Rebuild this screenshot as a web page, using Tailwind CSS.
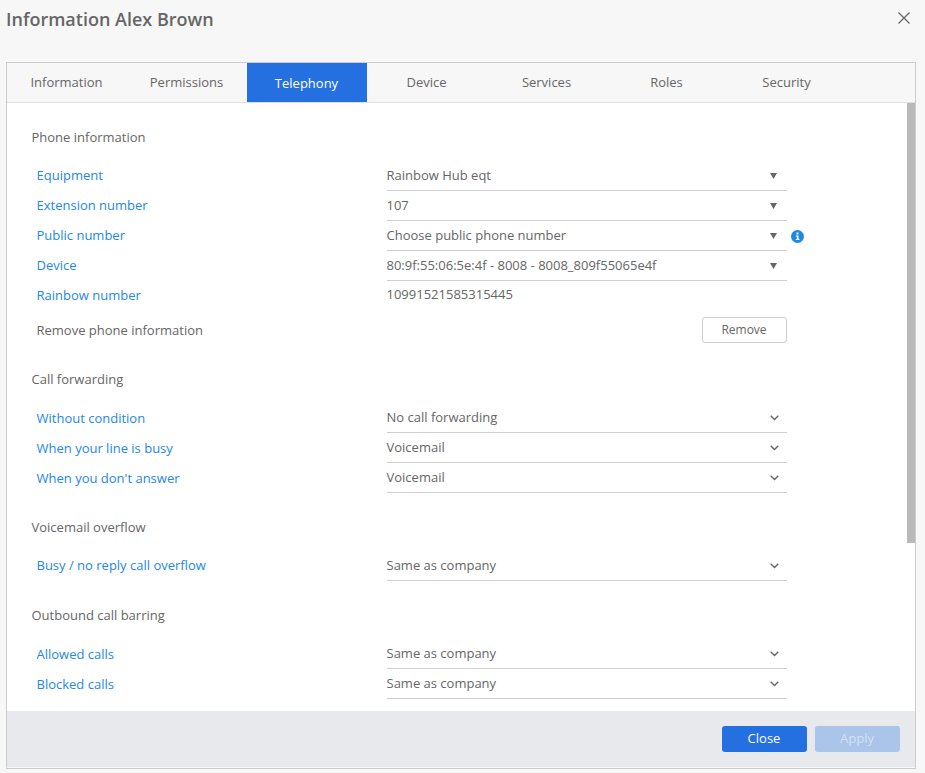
<!DOCTYPE html>
<html lang="en">
    <head>
        <meta charset="UTF-8" />
        <title>Information Alex Brown</title>
        <script src="https://cdn.jsdelivr.net/npm/@tailwindcss/browser@4"></script>
    </head>

    <body class="bg-[#f7f7f7] text-[#666] font-['Open_Sans',sans-serif] text-[13px] h-[773px] w-[925px] overflow-hidden">
        <!-- Header -->
        <div class="h-[62px] pl-[6px] pr-[14px] pt-[6px] flex justify-between items-start">
            <h1 class="text-[18px] leading-[26px] font-semibold text-[#666]">Information Alex Brown</h1>
            <svg class="w-[14px] h-[14px] mt-[5px]" viewBox="0 0 14 14" fill="none" stroke="#666" stroke-width="1.3"><path d="M1.5 1.5l11 11M12.5 1.5l-11 11" /></svg>
        </div>

        <div class="mx-[6px] w-[910px] h-[707px] border border-[#ccc] flex flex-col">
            <!-- Tabs -->
            <div class="flex h-[40px] border-b border-[#e0e0e0] shrink-0">
                <div class="w-[120px] h-[39px] pr-px flex items-center justify-center">Information</div>
                <div class="w-[120px] h-[39px] pr-px flex items-center justify-center">Permissions</div>
                <div class="w-[120px] h-[39px] pr-px flex items-center justify-center bg-[#2470e0] text-white pt-[2px]">Telephony</div>
                <div class="w-[120px] h-[39px] pr-px flex items-center justify-center">Device</div>
                <div class="w-[120px] h-[39px] pr-px flex items-center justify-center">Services</div>
                <div class="w-[120px] h-[39px] pr-px flex items-center justify-center">Roles</div>
                <div class="w-[120px] h-[39px] pr-px flex items-center justify-center">Security</div>
            </div>

            <!-- Content -->
            <div class="relative h-[608px] bg-white overflow-hidden pl-[24px] pt-[24px] shrink-0">
                <div class="absolute top-0 right-0 w-[8px] h-[440px] bg-[#b9b9b9]"></div>

                <h2 class="h-[20px] leading-[20px] mb-[14px] pl-[0.5px]">Phone information</h2>
                <div class="flex h-[30px]">
                    <div class="w-[356px] pl-[5.5px] pt-[5px] text-[#1e88e5]">Equipment</div>
                    <div class="w-[400px] flex justify-between items-center border-b border-[#d0d0d0] pt-px">
                        <span class="ml-[-0.5px]">Rainbow Hub eqt</span>
                        <svg class="w-[7px] h-[6px] mr-[10px]" viewBox="0 0 7 6" fill="#666"><path d="M0 0h7L3.5 6z" /></svg>
                    </div>
                </div>
                <div class="flex h-[30px]">
                    <div class="w-[356px] pl-[5.5px] pt-[5px] text-[#1e88e5]">Extension number</div>
                    <div class="w-[400px] flex justify-between items-center border-b border-[#d0d0d0] pt-px">
                        <span class="ml-[-0.5px]">107</span>
                        <svg class="w-[7px] h-[6px] mr-[10px]" viewBox="0 0 7 6" fill="#666"><path d="M0 0h7L3.5 6z" /></svg>
                    </div>
                </div>
                <div class="flex h-[30px]">
                    <div class="w-[356px] pl-[5.5px] pt-[5px] text-[#1e88e5]">Public number</div>
                    <div class="relative w-[400px] flex justify-between items-center border-b border-[#d0d0d0] pt-px">
                        <span class="ml-[-0.5px]">Choose public phone number</span>
                        <svg class="w-[7px] h-[6px] mr-[10px]" viewBox="0 0 7 6" fill="#666"><path d="M0 0h7L3.5 6z" /></svg>
                        <svg class="absolute left-[404px] top-[9px] w-[13px] h-[13px]" viewBox="0 0 13 13"><circle cx="6.5" cy="6.5" r="6.5" fill="#1e88e5" /><rect x="5.5" y="2.5" width="2" height="2" fill="#fff" /><path d="M4.8 5.5h2.7v3.5h1v1H4.8V9h1V6.5h-1z" fill="#fff" /></svg>
                    </div>
                </div>
                <div class="flex h-[30px]">
                    <div class="w-[356px] pl-[5.5px] pt-[5px] text-[#1e88e5]">Device</div>
                    <div class="w-[400px] flex justify-between items-center border-b border-[#d0d0d0] pt-px">
                        <span class="ml-[-0.5px]">80:9f:55:06:5e:4f - 8008 - 8008_809f55065e4f</span>
                        <svg class="w-[7px] h-[6px] mr-[10px]" viewBox="0 0 7 6" fill="#666"><path d="M0 0h7L3.5 6z" /></svg>
                    </div>
                </div>
                <div class="flex h-[30px]">
                    <div class="w-[356px] pl-[5.5px] pt-[5px] text-[#1e88e5]">Rainbow number</div>
                    <div class="w-[400px] pt-[4px] ml-[-0.5px]">10991521585315445</div>
                </div>
                <div class="flex h-[26px] mt-[6px] items-center justify-between w-[756px]">
                    <div class="pl-[5.5px] pt-[2px]">Remove phone information</div>
                    <button class="w-[85px] h-[26px] pb-px pr-px border border-[#ccc] rounded-[3px] bg-white text-[12px] text-[#666]">Remove</button>
                </div>

                <h2 class="h-[20px] leading-[20px] mt-[26px] mb-[14px] pl-[0.5px]">Call forwarding</h2>
                <div class="flex h-[30px]">
                    <div class="w-[356px] pl-[5.5px] pt-[6px] text-[#1e88e5]">Without condition</div>
                    <div class="w-[400px] flex justify-between items-center border-b border-[#d0d0d0] pt-px">
                        <span class="ml-[-0.5px]">No call forwarding</span>
                        <svg class="w-[9px] h-[6px] mr-[8.5px]" viewBox="0 0 9 6" fill="none" stroke="#666" stroke-width="1.4"><path d="M.7.7l3.8 3.8L8.3.7" /></svg>
                    </div>
                </div>
                <div class="flex h-[30px]">
                    <div class="w-[356px] pl-[5.5px] pt-[6px] text-[#1e88e5]">When your line is busy</div>
                    <div class="w-[400px] flex justify-between items-center border-b border-[#d0d0d0] pt-px">
                        <span class="ml-[-0.5px]">Voicemail</span>
                        <svg class="w-[9px] h-[6px] mr-[8.5px]" viewBox="0 0 9 6" fill="none" stroke="#666" stroke-width="1.4"><path d="M.7.7l3.8 3.8L8.3.7" /></svg>
                    </div>
                </div>
                <div class="flex h-[30px]">
                    <div class="w-[356px] pl-[5.5px] pt-[6px] text-[#1e88e5]">When you don't answer</div>
                    <div class="w-[400px] flex justify-between items-center border-b border-[#d0d0d0] pt-px">
                        <span class="ml-[-0.5px]">Voicemail</span>
                        <svg class="w-[9px] h-[6px] mr-[8.5px]" viewBox="0 0 9 6" fill="none" stroke="#666" stroke-width="1.4"><path d="M.7.7l3.8 3.8L8.3.7" /></svg>
                    </div>
                </div>

                <h2 class="h-[20px] leading-[20px] mt-[24px] mb-[14px] pl-[0.5px]">Voicemail overflow</h2>
                <div class="flex h-[30px]">
                    <div class="w-[356px] pl-[5.5px] pt-[5px] text-[#1e88e5]">Busy / no reply call overflow</div>
                    <div class="w-[400px] flex justify-between items-center border-b border-[#d0d0d0] pt-px">
                        <span class="ml-[-0.5px]">Same as company</span>
                        <svg class="w-[9px] h-[6px] mr-[8.5px]" viewBox="0 0 9 6" fill="none" stroke="#666" stroke-width="1.4"><path d="M.7.7l3.8 3.8L8.3.7" /></svg>
                    </div>
                </div>

                <h2 class="h-[20px] leading-[20px] mt-[24px] mb-[14px] pl-[0.5px]">Outbound call barring</h2>
                <div class="flex h-[30px]">
                    <div class="w-[356px] pl-[5.5px] pt-[6px] text-[#1e88e5]">Allowed calls</div>
                    <div class="w-[400px] flex justify-between items-center border-b border-[#d0d0d0] pt-px">
                        <span class="ml-[-0.5px]">Same as company</span>
                        <svg class="w-[9px] h-[6px] mr-[8.5px]" viewBox="0 0 9 6" fill="none" stroke="#666" stroke-width="1.4"><path d="M.7.7l3.8 3.8L8.3.7" /></svg>
                    </div>
                </div>
                <div class="flex h-[30px]">
                    <div class="w-[356px] pl-[5.5px] pt-[6px] text-[#1e88e5]">Blocked calls</div>
                    <div class="w-[400px] flex justify-between items-center border-b border-[#d0d0d0] pt-px">
                        <span class="ml-[-0.5px]">Same as company</span>
                        <svg class="w-[9px] h-[6px] mr-[8.5px]" viewBox="0 0 9 6" fill="none" stroke="#666" stroke-width="1.4"><path d="M.7.7l3.8 3.8L8.3.7" /></svg>
                    </div>
                </div>
            </div>

            <!-- Footer -->
            <div class="h-[56px] bg-[#e8e9ed] flex justify-end items-start gap-[8px] pt-[15px] pr-[15px] shrink-0">
                <button class="w-[85px] h-[26px] pr-px rounded-[3px] bg-[#2470e0] text-white text-[13px]">Close</button>
                <button class="w-[85px] h-[26px] pr-px rounded-[3px] bg-[#aac4ea] text-[#d6e1f4] text-[13px]">Apply</button>
            </div>
        </div>
    </body>
</html>
